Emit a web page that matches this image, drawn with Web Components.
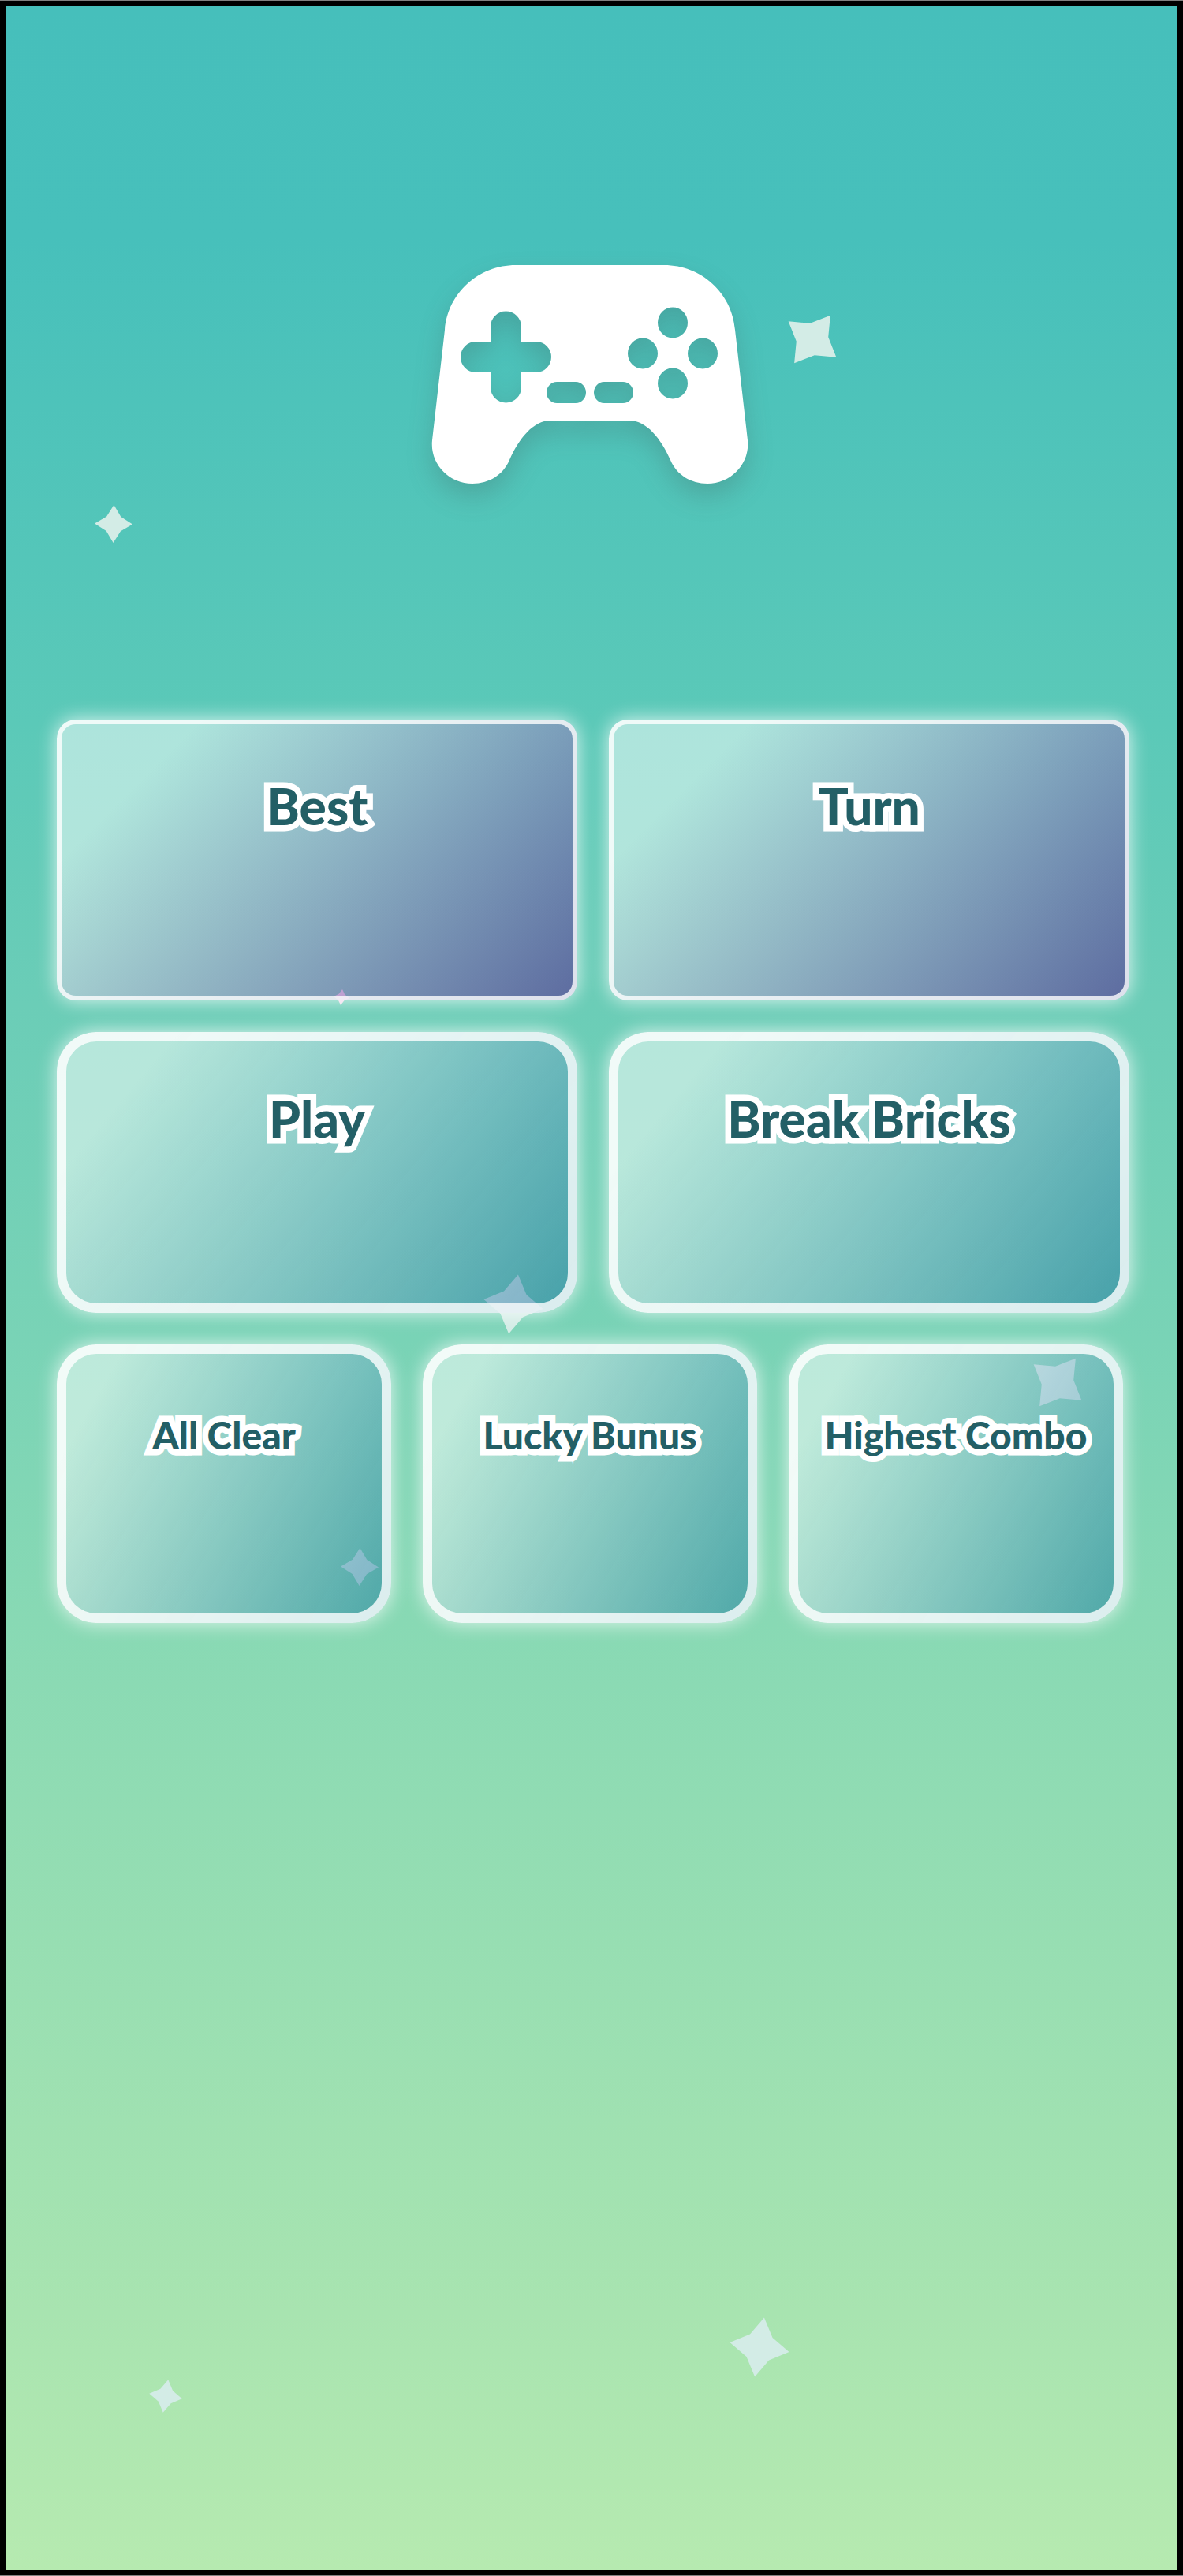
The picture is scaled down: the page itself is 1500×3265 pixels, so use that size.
<!DOCTYPE html>
<html lang="en">
<head>
<meta charset="utf-8">
<meta name="viewport" content="width=device-width, initial-scale=1">
<title>Game stats</title>
<style>
  body { margin: 0; box-sizing: border-box; min-height: 100vh; display: flex; flex-direction: column; border-block: 1px solid #808080; background: #000; }
</style>
</head>
<body>
<game-screen>
  <twinkle-star slot="sky" style="--x:1022px;--y:422px;--r:38px;--turn:37deg"></twinkle-star>
  <twinkle-star slot="sky" style="--x:136px;--y:656px;--r:24px;--turn:1deg"></twinkle-star>
  <twinkle-star slot="sky" style="--x:425px;--y:1256px;--r:10px;--turn:6deg;--fill:#ecdcec"></twinkle-star>
  <twinkle-star slot="sky" style="--x:643px;--y:1645px;--r:38px;--turn:9deg"></twinkle-star>
  <twinkle-star slot="sky" style="--x:1333px;--y:1744px;--r:38px;--turn:37deg"></twinkle-star>
  <twinkle-star slot="sky" style="--x:448px;--y:1978px;--r:24px;--turn:1deg"></twinkle-star>
  <twinkle-star slot="sky" style="--x:955px;--y:2967px;--r:38px;--turn:9deg"></twinkle-star>
  <twinkle-star slot="sky" style="--x:202px;--y:3029px;--r:21px;--turn:9deg"></twinkle-star>
  <game-pad slot="hero"></game-pad>
  <stat-row>
    <stat-tile tone="violet">Best</stat-tile>
    <stat-tile tone="violet">Turn</stat-tile>
  </stat-row>
  <stat-row>
    <stat-tile>Play</stat-tile>
    <stat-tile>Break Bricks</stat-tile>
  </stat-row>
  <stat-row inset>
    <stat-tile compact>All Clear</stat-tile>
    <stat-tile compact>Lucky Bunus</stat-tile>
    <stat-tile compact>Highest Combo</stat-tile>
  </stat-row>
</game-screen>

<script>
class GameScreen extends HTMLElement {
  constructor() {
    super();
    this.attachShadow({ mode: "open" }).innerHTML = `
      <style>
        :host {
          display: flex; flex: 1; position: relative; overflow: hidden;
          border: 8px solid #000; border-block-width: 7px;
          background: linear-gradient(#46bfbb 0, #47c0bb 9%, #5bc9b8 28%, #6bcdb7 39%, #79d3b6 52%, #88d9b4 63%, #a8e4b0 90%, #b6eab0 100%);
        }
        main { flex: 1; position: relative; display: flex; flex-direction: column; gap: 40px; padding: 328px 60px 64px 64px; }
        header { display: flex; justify-content: center; padding: 0 8px 258px 0; }
      </style>
      <slot name="sky"></slot>
      <main>
        <header><slot name="hero"></slot></header>
        <slot></slot>
      </main>`;
  }
}

class TwinkleStar extends HTMLElement {
  constructor() {
    super();
    this.attachShadow({ mode: "open" }).innerHTML = `
      <style>
        :host { position: absolute; left: calc(var(--x) - var(--r)); top: calc(var(--y) - var(--r)); width: calc(var(--r) * 2); height: calc(var(--r) * 2); }
        svg { display: block; width: 100%; height: 100%; overflow: visible; transform: rotate(var(--turn)); }
        path { fill: var(--fill, #d3ece6); }
      </style>
      <svg viewBox="-100 -100 200 200" aria-hidden="true">
        <path d="M0-100 38-38 100 0 38 38 0 100-38 38-100 0-38-38Z"/>
      </svg>`;
  }
}

class GamePad extends HTMLElement {
  constructor() {
    super();
    this.attachShadow({ mode: "open" }).innerHTML = `
      <style>
        :host { display: block; width: 400px; }
        svg { display: block; width: 100%; overflow: visible; filter: drop-shadow(0 16px 16px rgba(60, 60, 60, .2)); }
      </style>
      <svg viewBox="548 336 400 278" role="img" aria-label="Game controller">
        <path fill="#fff" fill-rule="evenodd" d="
          M654 336H842C889 336 928 371 932 418L948 558C951 588 927 613 897 613C876 613 858 602 850 583C838 556 820 533 798 533H698C676 533 658 556 646 583C638 602 620 613 599 613C569 613 545 588 548 558L564 418C568 371 607 336 654 336Z
          M622 414V433H603A19 19.500 0 0 0 603 472H622V491A19.500 19.500 0 0 0 661 491V472H680A19 19.500 0 0 0 680 433H661V414A19.500 19.500 0 0 0 622 414Z
          M834 409a19 19.500 0 1 0 38 0a19 19.500 0 1 0-38 0Z
          M796 448a19 19.500 0 1 0 38 0a19 19.500 0 1 0-38 0Z
          M872 448a19 19.500 0 1 0 38 0a19 19.500 0 1 0-38 0Z
          M834 486a19 19.500 0 1 0 38 0a19 19.500 0 1 0-38 0Z
          M706 484H730A13 13.500 0 0 1 730 511H706A13 13.500 0 0 1 706 484Z
          M766 484H790A13 13.500 0 0 1 790 511H766A13 13.500 0 0 1 766 484Z"/>
      </svg>`;
  }
}

class StatRow extends HTMLElement {
  constructor() {
    super();
    this.attachShadow({ mode: "open" }).innerHTML = `
      <style>
        :host { display: grid; grid-auto-flow: column; grid-auto-columns: minmax(0, 1fr); gap: 40px; }
        :host([inset]) { padding-right: 8px; }
      </style>
      <slot></slot>`;
  }
}

class StatTile extends HTMLElement {
  constructor() {
    super();
    this.attachShadow({ mode: "open" }).innerHTML = `
      <style>
        :host {
          display: block; box-sizing: border-box; min-height: 356px;
          padding-top: 68px; border: 12px solid rgba(255, 255, 255, .8); border-radius: 50px;
          background: linear-gradient(130deg, rgba(255, 255, 255, .5) 16%, rgba(0, 90, 150, .42)) border-box;
          box-shadow: 0 0 24px rgba(255, 255, 255, .8);
          --size: 64px; --line: 60px;
        }
        :host([tone="violet"]) {
          border-width: 6px; border-radius: 24px; padding-top: 74px;
          background: linear-gradient(135deg, rgba(255, 255, 255, .5) 18%, rgba(79, 10, 137, .5)) border-box;
        }
        :host([compact]) {
          min-height: 353px; --size: 48px; --line: 70px;
          background: linear-gradient(120deg, rgba(255, 255, 255, .5) 14%, rgba(0, 100, 150, .43)) border-box;
        }
        h2 {
          margin: 0; text-align: center; white-space: nowrap; color: #235f66;
          font: 900 var(--size)/var(--line) Lato, "Open Sans", sans-serif;
          -webkit-text-stroke: 15px #fff; paint-order: stroke fill;
        }
      </style>
      <h2><slot></slot></h2>`;
  }
}

customElements.define("game-screen", GameScreen);
customElements.define("twinkle-star", TwinkleStar);
customElements.define("game-pad", GamePad);
customElements.define("stat-row", StatRow);
customElements.define("stat-tile", StatTile);
</script>
</body>
</html>
